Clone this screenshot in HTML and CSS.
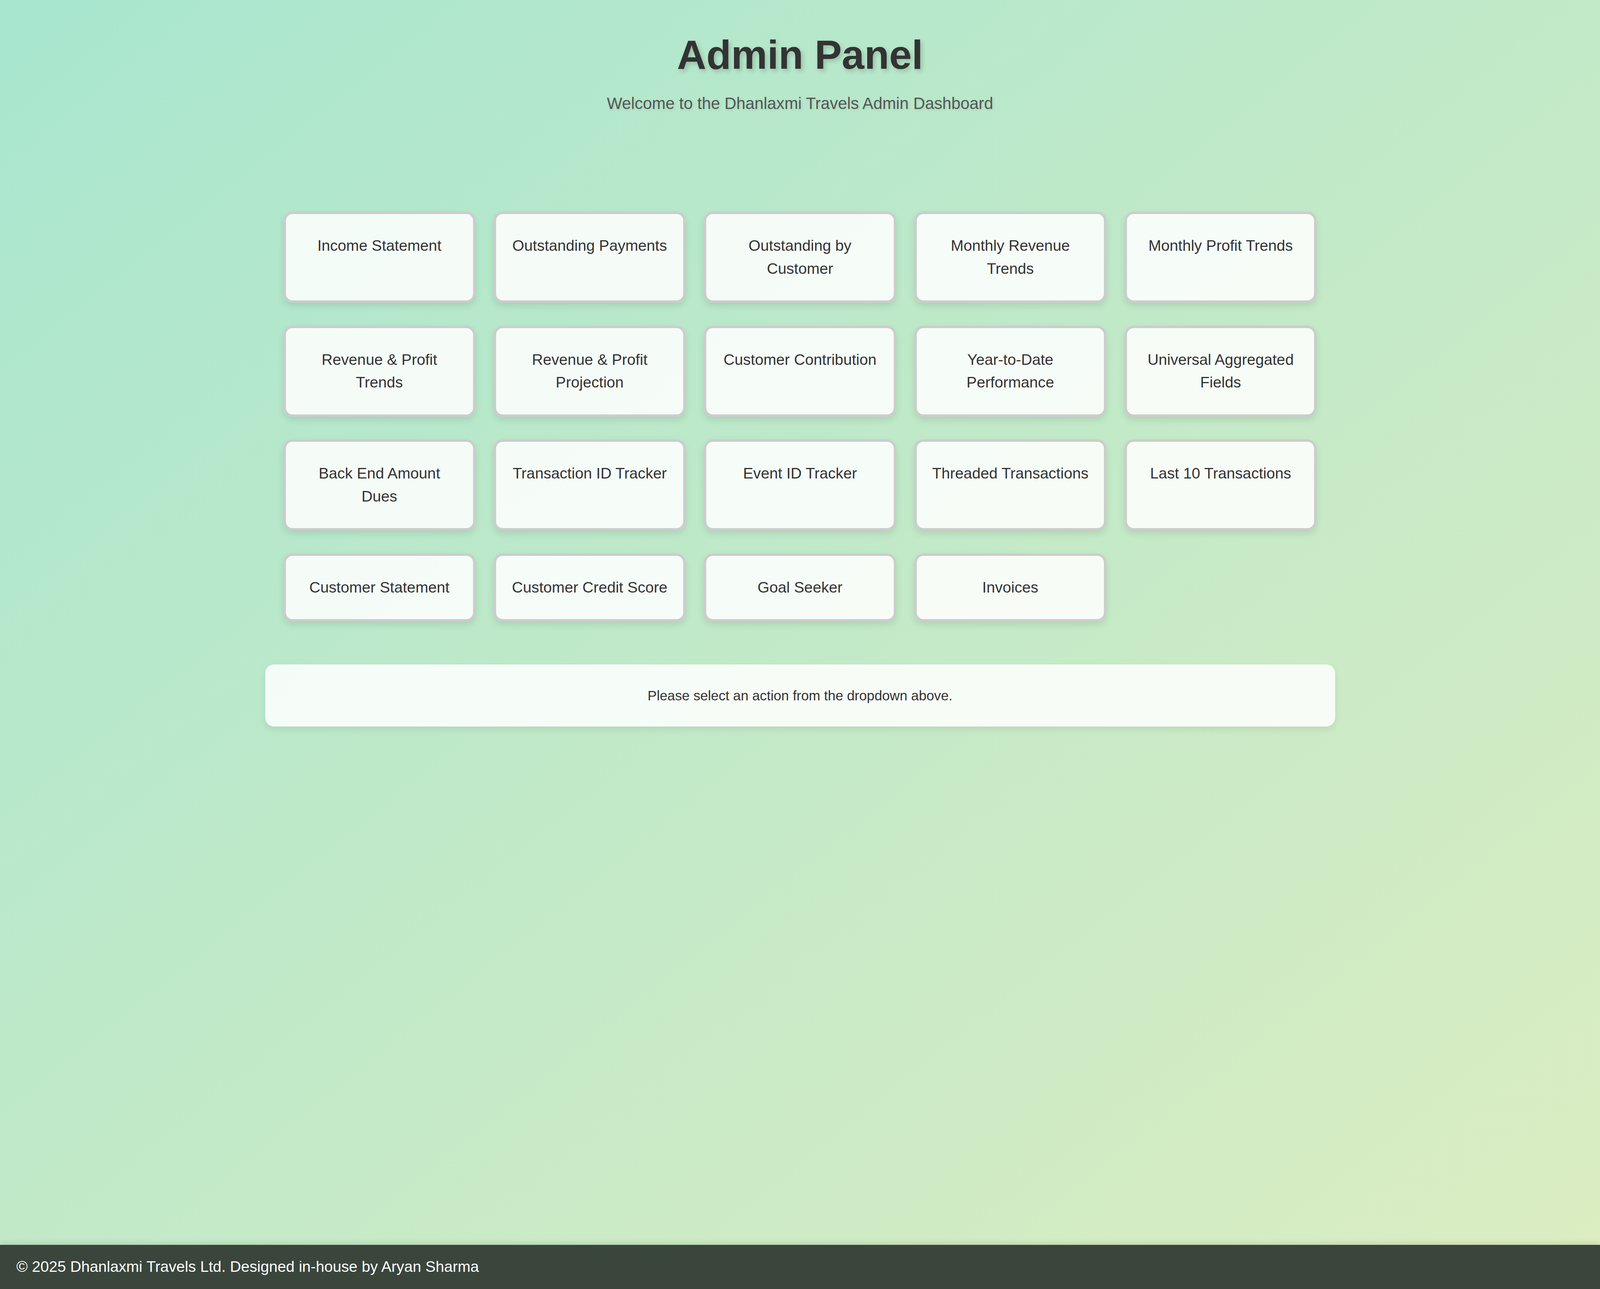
FILE: index.html
```html
<!DOCTYPE html>
<html lang="en">

<head>
    <meta charset="UTF-8">
    <meta name="viewport" content="width=device-width, initial-scale=1.0">
    <title>Admin Panel - Dhanlaxmi Travels</title>
    <link rel="stylesheet" href="styles.css">
</head>

<body>
    <header class="page-header">
        <h1>Admin Panel</h1>
        <p class="subtitle">Welcome to the Dhanlaxmi Travels Admin Dashboard</p>
    </header>

    <main class="content">
        <div class="panel">
            <div class="action-grid">
                <div class="action-card">Income Statement</div>
                <div class="action-card">Outstanding Payments</div>
                <div class="action-card">Outstanding by Customer</div>
                <div class="action-card">Monthly Revenue Trends</div>
                <div class="action-card">Monthly Profit Trends</div>
                <div class="action-card">Revenue &amp; Profit Trends</div>
                <div class="action-card">Revenue &amp; Profit Projection</div>
                <div class="action-card">Customer Contribution</div>
                <div class="action-card">Year-to-Date Performance</div>
                <div class="action-card">Universal Aggregated Fields</div>
                <div class="action-card">Back End Amount Dues</div>
                <div class="action-card">Transaction ID Tracker</div>
                <div class="action-card">Event ID Tracker</div>
                <div class="action-card">Threaded Transactions</div>
                <div class="action-card">Last 10 Transactions</div>
                <div class="action-card">Customer Statement</div>
                <div class="action-card">Customer Credit Score</div>
                <div class="action-card">Goal Seeker</div>
                <div class="action-card">Invoices</div>
            </div>

            <div class="output" id="output">Please select an action from the dropdown above.</div>
        </div>
    </main>

    <footer class="page-footer">
        &copy; 2025 Dhanlaxmi Travels Ltd. Designed in-house by Aryan Sharma
    </footer>
</body>

</html>
```

FILE: styles.css
```css
* {
    box-sizing: border-box;
}

body {
    margin: 0;
    min-height: 100vh;
    display: flex;
    flex-direction: column;
    font-family: 'Liberation Sans', Arial, Helvetica, sans-serif;
    color: #333;
    background: linear-gradient(to bottom right, #a8e6cf, #dcedc1);
}

.page-header {
    padding-top: 65px;
    text-align: center;
}

.page-header h1 {
    margin: 0;
    font-size: 104px;
    line-height: 150px;
    font-weight: bold;
    color: #333;
    text-shadow: 5px 6px 12px rgba(0, 0, 0, 0.18);
}

.subtitle {
    margin: 20px 0 0;
    font-size: 41.8px;
    line-height: 60px;
    color: #555;
    text-shadow: 3px 3px 6px rgba(0, 0, 0, 0.1);
}

.content {
    flex: 1;
    padding-top: 247px;
}

.panel {
    width: 2739px;
    margin: 0 auto;
}

.action-grid {
    display: grid;
    grid-template-columns: repeat(5, 1fr);
    gap: 58.5px 47px;
    padding: 0 47px;
}

.action-card {
    padding: 52px 35px;
    border: 6px solid #ccc;
    border-radius: 23px;
    background-color: rgba(255, 255, 255, 0.86);
    box-shadow: 0 8px 18px rgba(0, 0, 0, 0.1);
    font-size: 39.15px;
    line-height: 58.5px;
    text-align: center;
    color: #333;
    cursor: pointer;
}

.action-card:hover {
    background-color: #fff;
}

.output {
    margin-top: 110px;
    padding: 54px 40px;
    border-radius: 23px;
    background-color: rgba(255, 255, 255, 0.86);
    box-shadow: 0 8px 18px rgba(0, 0, 0, 0.08);
    font-size: 35.2px;
    line-height: 51px;
    text-align: center;
    color: #333;
}

.page-footer {
    padding: 28px 42px 29px;
    background-color: #3a463c;
    color: #fff;
    font-size: 39.15px;
    line-height: 56px;
    box-shadow: 0 -5px 12px rgba(0, 0, 0, 0.1);
}
```
